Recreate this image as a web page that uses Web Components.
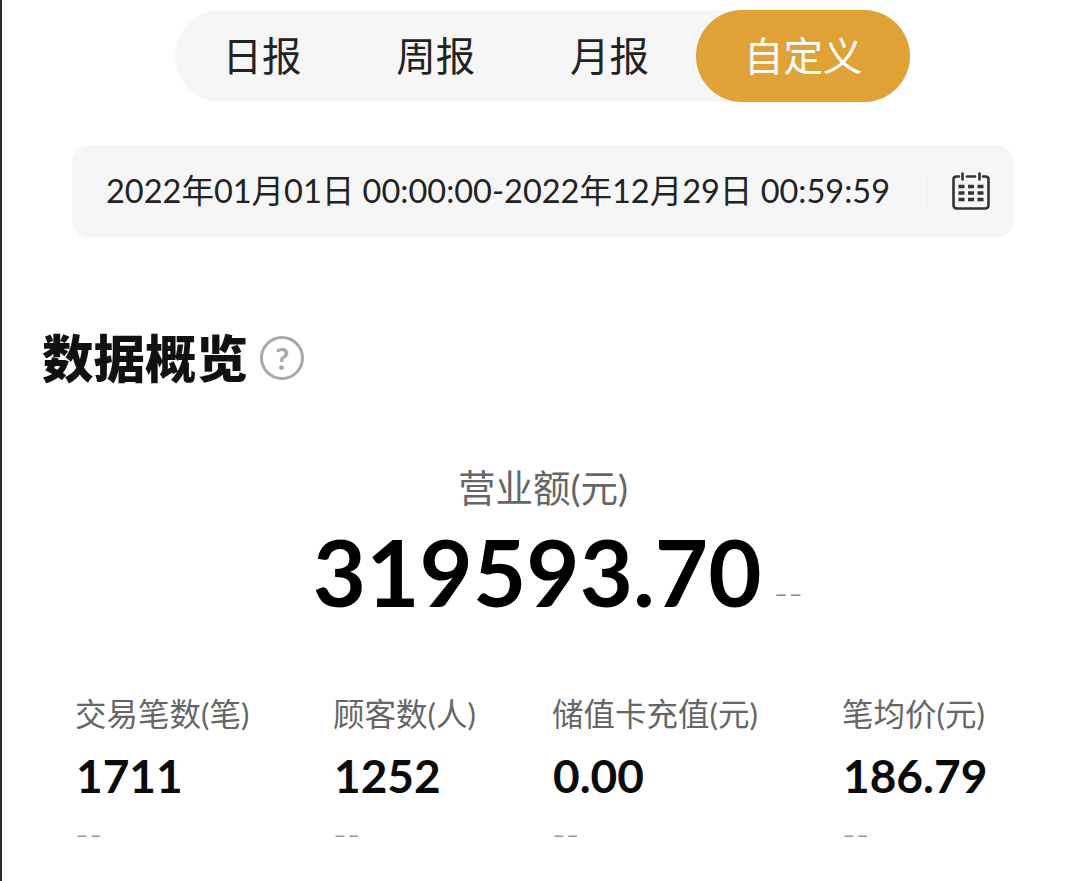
<!DOCTYPE html>
<html lang="zh-CN">
  <head>
    <meta charset="utf-8" />
    <title>数据概览</title>
    <style>
      html, body { margin: 0; background: #fff; }
      body {
        width: 1080px;
        height: 881px;
        overflow: hidden;
        box-sizing: border-box;
        border-left: 2px solid #2a2a2a;
        font-family: Lato, "Noto Sans CJK SC", sans-serif;
      }
    </style>
  </head>
  <body>
    <report-tabs>
      <report-tab>日报</report-tab>
      <report-tab>周报</report-tab>
      <report-tab>月报</report-tab>
      <report-tab active>自定义</report-tab>
    </report-tabs>
    <date-range>2022年01月01日 00:00:00-2022年12月29日 00:59:59</date-range>
    <section-title>数据概览</section-title>
    <main-figure label="营业额(元)" value="319593.70"></main-figure>
    <stat-row>
      <stat-item label="交易笔数(笔)" value="1711"></stat-item>
      <stat-item label="顾客数(人)" value="1252"></stat-item>
      <stat-item label="储值卡充值(元)" value="0.00"></stat-item>
      <stat-item label="笔均价(元)" value="186.79"></stat-item>
    </stat-row>

    <script type="module">
      const define = (name, html, init) => {
        customElements.define(
          name,
          class extends HTMLElement {
            connectedCallback() {
              if (this.shadowRoot) return;
              this.attachShadow({mode: 'open'}).innerHTML = html;
              if (init) init(this);
            }
          }
        );
      };
      const fill = (el) => {
        el.shadowRoot.querySelectorAll('[data-attr]').forEach((node) => {
          node.textContent = el.getAttribute(node.dataset.attr);
        });
      };

      define('report-tabs', `
        <style>
          :host {
            display: flex;
            width: 735px;
            height: 92px;
            margin: 10px 0 0 173px;
            border-radius: 46px;
            background: #f6f6f6;
          }
        </style>
        <slot></slot>`);

      define('report-tab', `
        <style>
          :host {
            display: flex;
            align-items: center;
            justify-content: center;
            width: 174px;
            height: 92px;
            font-size: 39.5px;
            color: #222;
            border-radius: 46px;
            line-height: 1;
          }
          :host([active]) {
            width: 214px;
            background: #e0a136;
            color: #fff;
          }
        </style>
        <slot></slot>`);

      define('date-range', `
        <style>
          :host {
            display: flex;
            align-items: center;
            box-sizing: border-box;
            width: 942px;
            height: 93px;
            margin: 43px 0 0 70px;
            padding: 0 24px 0 34px;
            border-radius: 18px;
            background: #f6f6f6;
            color: #222;
            font-size: 32.5px;
            white-space: nowrap;
          }
          .text { flex: 1; padding-bottom: 7px; }
          .sep {
            width: 2px;
            height: 36px;
            margin-right: 24px;
            background: #efefef;
          }
          svg { display: block; margin-top: -2px; }
        </style>
        <span class="text"><slot></slot></span>
        <span class="sep"></span>
        <svg width="38" height="38" viewBox="0 0 38 38" fill="none" stroke="#333" stroke-linecap="round">
          <path d="M7 4.5H4.5Q1.5 4.5 1.5 7.5V33Q1.5 36.5 5 36.5H33Q36.5 36.5 36.5 33V7.5Q36.5 4.5 33.5 4.5H31" stroke-width="2.6" />
          <path d="M15 4.5H23" stroke-width="2.6" />
          <path d="M10.5 1.5V7.5M27.5 1.5V7.5" stroke-width="2.6" />
          <path d="M6.5 14.5H12.5M16 14.5H22M25.5 14.5H31.5M6.5 21H12.5M16 21H22M25.5 21H31.5M6.5 27.5H12.5M16 27.5H22M25.5 27.5H31.5" stroke-width="3.4" stroke-linecap="butt" />
        </svg>`);

      define('section-title', `
        <style>
          :host {
            display: flex;
            align-items: center;
            gap: 12px;
            margin: 90px 0 0 40px;
            height: 60px;
            color: #111;
            font-size: 51.5px;
            font-weight: 900;
            line-height: 60px;
          }
          .help {
            box-sizing: border-box;
            display: flex;
            align-items: center;
            justify-content: center;
            width: 44px;
            height: 44px;
            border: 3px solid #a8a8a8;
            border-radius: 50%;
            color: #a8a8a8;
            font: 700 31px Lato, sans-serif;
          }
        </style>
        <span><slot></slot></span>
        <span class="help">?</span>`);

      define('main-figure', `
        <style>
          :host {
            display: flex;
            flex-direction: column;
            align-items: center;
            margin-top: 75px;
          }
          .label {
            height: 50px;
            font-size: 37.5px;
            line-height: 50px;
            color: #666;
            margin-left: 4px;
          }
          .row {
            display: flex;
            align-items: baseline;
            margin: 3px 0 0 34px;
            height: 111px;
          }
          .value {
            font-size: 92px;
            font-weight: 700;
            line-height: 112px;
            color: #000;
          }
          .delta {
            margin-left: 12px;
            font-size: 40px;
            font-weight: 300;
            color: #888;
          }
        </style>
        <div class="label" data-attr="label"></div>
        <div class="row"><span class="value" data-attr="value"></span><span class="delta">--</span></div>`, fill);

      define('stat-row', `
        <style>
          :host {
            display: grid;
            grid-template-columns: 258px 219px 290px auto;
            margin: 64px 0 0 74px;
          }
        </style>
        <slot></slot>`);

      define('stat-item', `
        <style>
          :host { display: block; white-space: nowrap; }
          .label {
            height: 46px;
            margin-left: -1px;
            font-size: 31.5px;
            line-height: 46px;
            color: #666;
          }
          .value {
            height: 56px;
            margin-top: 11px;
            font-size: 46px;
            font-weight: 700;
            line-height: 56px;
            color: #0a0a0a;
          }
          .delta {
            margin-top: 14px;
            margin-left: -1px;
            font-size: 37px;
            font-weight: 300;
            line-height: 30px;
            color: #999;
          }
        </style>
        <div class="label" data-attr="label"></div>
        <div class="value" data-attr="value"></div>
        <div class="delta">--</div>`, fill);
    </script>
  </body>
</html>
